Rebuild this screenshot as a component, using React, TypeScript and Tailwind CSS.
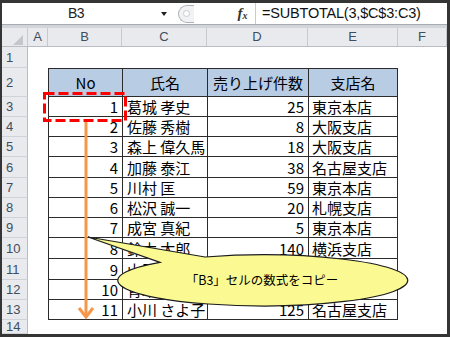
type Row = { n: number; name: string; cnt: number | ""; branch: string; h: string };

const rows: Row[] = [
  { n: 1, name: "葛城 孝史", cnt: 25, branch: "東京本店", h: "h-[20px]" },
  { n: 2, name: "佐藤 秀樹", cnt: 8, branch: "大阪支店", h: "h-[20px]" },
  { n: 3, name: "森上 偉久馬", cnt: 18, branch: "大阪支店", h: "h-[20px]" },
  { n: 4, name: "加藤 泰江", cnt: 38, branch: "名古屋支店", h: "h-[21px]" },
  { n: 5, name: "川村 匡", cnt: 59, branch: "東京本店", h: "h-[20px]" },
  { n: 6, name: "松沢 誠一", cnt: 20, branch: "札幌支店", h: "h-[20px]" },
  { n: 7, name: "成宮 真紀", cnt: 5, branch: "東京本店", h: "h-[20px]" },
  { n: 8, name: "鈴木 太郎", cnt: 140, branch: "横浜支店", h: "h-[21px]" },
  // rows 9 and 10 sit under the callout, only the name's first glyph peeks out
  { n: 9, name: "山田", cnt: "", branch: "", h: "h-[21px]" },
  { n: 10, name: "青木", cnt: "", branch: "", h: "h-[20px]" },
  { n: 11, name: "小川 さよ子", cnt: 125, branch: "名古屋支店", h: "h-[20px]" },
];

const cols = [
  { label: "A", w: "w-[20px]" },
  { label: "B", w: "w-[74px]" },
  { label: "C", w: "w-[85px]" },
  { label: "D", w: "w-[101px]" },
  { label: "E", w: "w-[90px]" },
  { label: "F", w: "w-[49px]" },
];

function RowHead({ label }: { label: string | number }) {
  return (
    <div className="w-[26px] shrink-0 h-full bg-[#e8eaed] border-r border-b border-r-[#b9bdc3] border-b-[#cfd2d6] pl-[4px] flex items-center font-['Liberation_Sans',sans-serif] text-[13px] text-[#3f4d60]">
      {label}
    </div>
  );
}

function FormulaBar() {
  return (
    <div className="flex h-[21px] bg-white items-center shrink-0">
      <div className="w-[148px] text-center font-['Liberation_Sans',sans-serif] text-[14px] text-[#222] tracking-[-0.5px]">
        B3
      </div>
      <div className="w-[28px] flex justify-center">
        <div className="w-0 h-0 border-l-[3px] border-r-[3px] border-t-[4px] border-l-transparent border-r-transparent border-t-[#222]" />
      </div>
      <div className="w-[16px] h-[18px] rounded-l-full border border-r-0 border-[#aeb2b8] bg-[#f1f2f4] flex items-center pl-[4px]">
        <div className="w-[7px] h-[7px] rounded-full border border-[#c9ccd0] bg-white" />
      </div>
      <div className="w-[36px] h-full" />
      <div className="w-[25px] h-full flex items-center justify-center font-['Liberation_Serif',serif] italic font-bold text-[15px] text-[#333]">
        f<span className="text-[10px] mt-[3px]">x</span>
      </div>
      <div className="flex-1 h-full border-l border-[#c8ccd0] pl-[6px] flex items-center font-['Liberation_Sans',sans-serif] text-[14.5px] text-[#111] tracking-[-0.2px]">
        =SUBTOTAL(3,$C$3:C3)
      </div>
    </div>
  );
}

function ColumnHeader() {
  return (
    <div className="flex h-[19px] shrink-0 bg-[#e8eaed] border-b border-[#b9bdc3]">
      <div className="w-[26px] relative border-r border-[#c6cace]">
        <svg className="absolute right-[4px] bottom-[1px]" width="10" height="10" viewBox="0 0 10 10">
          <polygon points="10,0 10,10 0,10" fill="#c3c7cc" />
        </svg>
      </div>
      {cols.map((c) => (
        <div
          key={c.label}
          className={`${c.w} border-r border-[#c6cace] flex items-center justify-center font-['Liberation_Sans',sans-serif] text-[13px] text-[#3f4d60]`}
        >
          {c.label}
        </div>
      ))}
    </div>
  );
}

const cell = "h-full border-l border-b border-[#2b2b2b] flex items-center whitespace-nowrap overflow-hidden";

function Sheet() {
  return (
    <div className="flex-1 flex flex-col bg-white font-['Noto_Sans_CJK_JP',sans-serif] text-[15px] leading-none text-black">
      <div className="flex h-[21px] shrink-0">
        <RowHead label={1} />
      </div>
      <div className="flex h-[29px] shrink-0">
        <RowHead label={2} />
        <div className="w-[20px]" />
        <div className={`${cell} border-t w-[74px] justify-center bg-[#b8cce4]`}>No</div>
        <div className={`${cell} border-t w-[85px] justify-center bg-[#b8cce4]`}>氏名</div>
        <div className={`${cell} border-t w-[101px] justify-center bg-[#b8cce4]`}>売り上げ件数</div>
        <div className={`${cell} border-t border-r w-[90px] justify-center bg-[#b8cce4]`}>支店名</div>
      </div>
      {rows.map((r) => (
        <div key={r.n} className={`flex shrink-0 ${r.h}`}>
          <RowHead label={r.n + 2} />
          <div className="w-[20px]" />
          <div className={`${cell} w-[74px] justify-end pr-[4px]`}>{r.n}</div>
          <div className={`${cell} w-[85px] pl-[4px]`}>{r.name}</div>
          <div className={`${cell} w-[101px] justify-end pr-[4px]`}>{r.cnt}</div>
          <div className={`${cell} border-r w-[90px] pl-[3px]`}>{r.branch}</div>
        </div>
      ))}
      <div className="flex flex-1">
        <RowHead label={14} />
      </div>
    </div>
  );
}

export default function App() {
  return (
    <div className="relative w-[450px] h-[337px] overflow-hidden bg-[#353535] pl-[2px] pt-[3px] pr-[3px] pb-[3px] flex flex-col">
      <div className="flex-1 flex flex-col bg-white overflow-hidden">
        <FormulaBar />
        <div className="h-[4px] shrink-0 bg-[#d2d5d9] border-t border-[#a8abb0]" />
        <ColumnHeader />
        <Sheet />
      </div>

      <svg className="absolute top-0 left-0 pointer-events-none" width="450" height="337" viewBox="0 0 450 337">
        <rect x="44.5" y="93.5" width="81" height="27" fill="none" stroke="#ff0000" strokeWidth="3" strokeDasharray="10 4" />
        <line x1="86" y1="122" x2="86" y2="316" stroke="#f79646" strokeWidth="3" />
        <polyline points="79,308 86,317 93,308" fill="none" stroke="#f79646" strokeWidth="3" strokeLinejoin="miter" />
        <path
          d="M 160 262.4 L 88 237 L 205 257 A 145 25.5 0 1 1 160 262.4 Z"
          fill="#fbfa92"
          stroke="#1c1c1c"
          strokeWidth="1.2"
        />
      </svg>
      <div className="absolute left-[117px] top-[274px] w-[290px] text-center font-['Noto_Sans_CJK_JP',sans-serif] text-[12.5px] leading-none text-black">
        「B3」セルの数式をコピー
      </div>
    </div>
  );
}
